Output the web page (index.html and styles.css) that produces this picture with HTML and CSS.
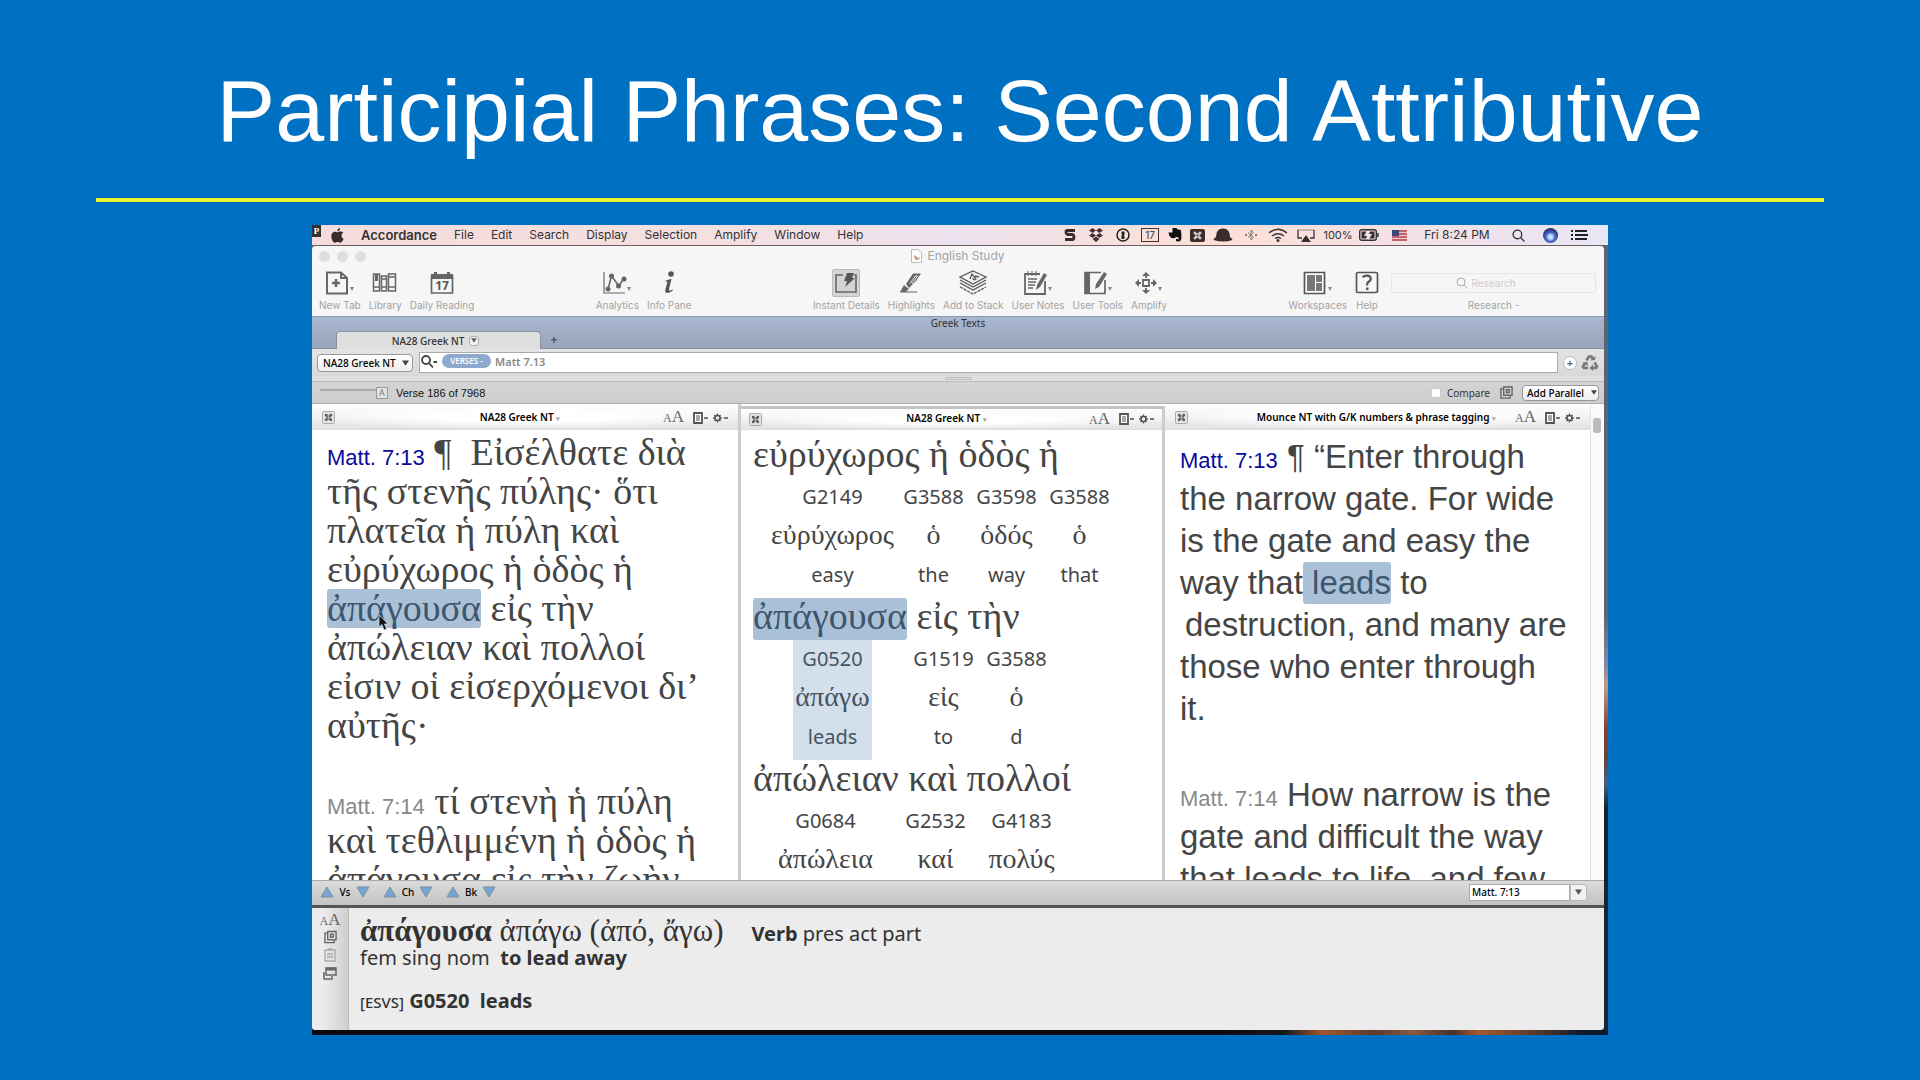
FILE: index.html
```html
<!DOCTYPE html>
<html lang="en">
<head>
<meta charset="utf-8">
<title>Participial Phrases: Second Attributive</title>
<link rel="stylesheet" href="styles.css">
</head>
<body>
<svg class="defs" aria-hidden="true">
  <symbol id="down" viewBox="0 0 8 6"><path d="M0 0h8L4 6z"/></symbol>
  <symbol id="cmd" viewBox="0 0 13 13"><rect x=".5" y=".5" width="12" height="12" rx="1" fill="#e4e4e4" stroke="#aaa"/><path d="M5 5V4.200a.8.8 0 1 0-.8.800h4.600a.8.8 0 1 0-.8-.8v4.600a.8.8 0 1 0 .8-.8H4.200a.8.8 0 1 0 .8.800z" fill="none" stroke="#555" stroke-width="1.200"/></symbol>
  <symbol id="page" viewBox="0 0 15 12"><path d="M1 1h8v10H1z" fill="#fff" stroke="#555" stroke-width="1.8"/><path d="M3 4h4M3 6h4M3 8h4" stroke="#555" stroke-width="1.200"/><path d="M11 6h4" stroke="#555" stroke-width="1.6"/></symbol>
  <symbol id="gear" viewBox="0 0 15 12"><circle cx="4.500" cy="6" r="2.500" fill="none" stroke="#555" stroke-width="1.600"/><path d="M4.500 1.500v2M4.500 8.500v2M0 6h2M7 6h2M1.500 3l1.200 1.200M7.500 3L6.300 4.200M1.500 9l1.200-1.200M7.500 9L6.300 7.800" stroke="#555" stroke-width="1.400"/><path d="M11 6h4" stroke="#555" stroke-width="1.600"/></symbol>
  <symbol id="lens" viewBox="0 0 12 12"><circle cx="5" cy="5" r="4"/><path d="M8 8l3.500 3.500"/></symbol>
  <symbol id="stackpage" viewBox="0 0 14 14"><path d="M4 1h9v9H4zM3 3H1v10h10v-2M7 8V4h3v3H7" fill="none" stroke="#666" stroke-width="1.500"/></symbol>
  <symbol id="up-tri" viewBox="0 0 14 12"><path d="M7 1l6 10H1z" fill="#78a3d3" stroke="#7a8fa8"/></symbol>
  <symbol id="down-tri" viewBox="0 0 14 12"><path d="M7 11L1 1h12z" fill="#78a3d3" stroke="#7a8fa8"/></symbol>
</svg>

<div class="slide">
  <h1 class="title">Participial Phrases: Second Attributive</h1>
  <hr class="rule">
  <main class="desktop">
    <nav class="menubar">
      <span class="badge">P</span>
      <svg class="apple" width="13" height="15" viewBox="0 0 13 15"><path d="M9 0C7.500.2 6.300 1.500 6.500 3.200 8 3.200 9.200 1.700 9 0zM6.600 4.200C5.700 4.200 5 3.700 3.900 3.700 2 3.700.3 5.300.3 8.200c0 3.200 2 6.500 3.600 6.500 1 0 1.500-.6 2.700-.6s1.600.6 2.600.6c1.500 0 2.900-2.400 3.400-3.900-2.700-1.200-2.700-4.800-.3-6C11.600 4 10.500 3.600 9.500 3.600c-1.200 0-2 .6-2.900.6z" fill="#3b2b2d"/></svg>
      <a href="#" class="app">Accordance</a><a href="#">File</a><a href="#">Edit</a><a href="#">Search</a><a href="#">Display</a><a href="#">Selection</a><a href="#">Amplify</a><a href="#">Window</a><a href="#">Help</a>
      <div class="status">
        <span class="w24"><svg width="12" height="14" viewBox="0 0 12 14"><path d="M11 2.500H3.500Q2 2.500 2 4t1.500 2.500h5Q10 7 10 9t-1.500 2.500H1" fill="none" stroke="#3b2b2d" stroke-width="3"/></svg></span>
        <span class="w28"><svg width="16" height="14" viewBox="0 0 16 14" fill="#4a3032"><path d="M4.500 0L8 2.500 4.500 5 1 2.500zM11.500 0L15 2.500 11.500 5 8 2.500zM4.500 5L8 7.500 4.500 10 1 7.500zM11.500 5L15 7.500 11.500 10 8 7.500zM8 8.500l3.500 2.500L8 14l-3.500-3z"/></svg></span>
        <span class="w26"><svg width="14" height="14" viewBox="0 0 14 14"><circle cx="7" cy="7" r="6" fill="none" stroke="#222" stroke-width="1.500"/><path d="M5.500 3.500h3V7l-.7.800.7.700v2.500h-3V7.500l.7-.7-.7-.8z" fill="#222"/></svg></span>
        <span class="w28"><span class="cal">17</span></span>
        <span class="w22"><svg width="14" height="14" viewBox="0 0 14 14" fill="#111"><path d="M4.500 0h4l.8 1.200 3.500.8q1 4 .5 9-.4 2.600-3 2.600H9q-1.500-.6-1-2.600h2v1q1-1 .5-2.500L8 9 7 10q-3 .5-4.500-.7Q.5 7 .5 4.500h4z"/></svg></span>
        <span class="w22"><svg width="15" height="13" viewBox="0 0 15 13"><rect width="15" height="13" rx="2" fill="#3b2b2d"/><path d="M6 5V4a1 1 0 1 0-1 1h5a1 1 0 1 0-1-1v5a1 1 0 1 0 1-1H5a1 1 0 1 0 1 1z" fill="none" stroke="#fff"/></svg></span>
        <span class="w30"><svg width="20" height="14" viewBox="0 0 20 14" fill="#3b2b2d"><path d="M3 9q0-8.500 7-8.500T17 9q2 1 2.500 3-9 3-19 0Q1 10 3 9z"/></svg></span>
        <span class="w26"><svg width="12" height="14" viewBox="0 0 12 14"><path d="M3 4.500l5.500 5L6 12V2l2.500 2.500-5.500 5" fill="none" stroke="#777"/><path d="M0 7h2M10 7h2" stroke="#777" stroke-width="2"/></svg></span>
        <span class="w28"><svg width="20" height="14" viewBox="0 0 20 14" fill="none" stroke="#333" stroke-width="1.400"><path d="M1 5q9-7.500 18 0M4 8q6-4.500 12 0M7 10.500q3-2 6 0"/><circle cx="10" cy="12.500" r=".8" fill="#333"/></svg></span>
        <span class="w28"><svg width="18" height="13" viewBox="0 0 18 13"><path d="M5 9H1V1M17 1v8h-4" fill="none" stroke="#333" stroke-width="1.300"/><path d="M1 1h16" stroke="#776" stroke-width=".8"/><path d="M9 6l5 7H4z" fill="#333"/></svg></span>
        <span class="w36 pct">100%</span>
        <span class="w26"><svg width="20" height="12" viewBox="0 0 20 12"><rect x=".7" y=".7" width="16.600" height="10.600" rx="2" fill="none" stroke="#333" stroke-width="1.400"/><path d="M2.500 2.500h5L5 7h3l-1 2.500H2.500zM15.500 9.500h-5L13 5h-3l1-2.500h4.500z" fill="#333"/><path d="M19 4v4" stroke="#333" stroke-width="1.500"/></svg></span>
        <span class="w34"><svg width="15" height="11" viewBox="0 0 15 11"><path d="M0 0h15v11H0z" fill="#e9c9cf"/><path d="M0 1h15M0 4h15M0 7h15M0 10h15" stroke="#b8434f" stroke-width="1.500"/><path d="M0 0h7v6H0z" fill="#3c4577"/></svg></span>
        <span class="w82 clock">Fri 8:24 PM</span>
        <span class="w40"><svg class="stroke" width="13" height="13"><use href="#lens"/></svg></span>
        <span class="w24"><span class="siri"></span></span>
        <span class="w34"><svg width="17" height="12" viewBox="0 0 17 12"><path d="M0 2h2M4 2h12M0 6h2M4 6h13M0 10h2M4 10h12" stroke="#222" stroke-width="1.800"/></svg></span>
      </div>
    </nav>

    <section class="window">
      <header class="chrome">
        <div class="titlebar">
          <div class="lights"><i></i><i></i><i></i></div>
          <div class="wtitle"><svg width="11" height="14" viewBox="0 0 11 14"><path d="M.5.500H7L10.500 4v9.500H.5z" fill="#fff" stroke="#bbb"/><path d="M3 6q0 5 3 5t2.500-3L7 9 5 7z" fill="#d09a86"/></svg>English Study</div>
        </div>
        <div class="toolbar">
          <div class="group">
            <button class="tool"><svg width="30" height="24" viewBox="0 0 30 24"><path d="M2 1.500h14L22 7v15.500H2zM16 2v5h6" fill="none" stroke="#666" stroke-width="2"/><path d="M11 8v8M7 12h8" stroke="#666" stroke-width="2.500"/><path d="M25 16h4l-2 4z" fill="#888"/></svg>New Tab</button>
            <button class="tool"><svg width="26" height="24" viewBox="0 0 26 24"><path d="M1.500 3h6v17h-6zM9.500 5h5v15h-5zM16.500 3h7v17h-7zM1.500 16h6M9.500 8h5M9.500 16h5M16.500 6h7M16.500 16h7" fill="none" stroke="#666" stroke-width="1.500"/><path d="M3 3h3v7H3z" fill="#666"/></svg>Library</button>
            <button class="tool"><svg width="24" height="24" viewBox="0 0 24 24"><path d="M1.500 5h21v17h-21z" fill="none" stroke="#666" stroke-width="1.700"/><path d="M1 3h22v5H1zM4 1h3v3H4zM17 1h3v3h-3z" fill="#666"/><text x="12" y="19" text-anchor="middle" class="day">17</text></svg>Daily Reading</button>
          </div>
          <div class="group">
            <button class="tool"><svg width="30" height="24" viewBox="0 0 30 24"><path d="M2 1v21h21" fill="none" stroke="#666" stroke-width="1.200"/><path d="M6 18L9.500 5 17 15l5-8" fill="none" stroke="#666" stroke-width="1.600"/><circle cx="6" cy="18" r="2.500" fill="#666"/><circle cx="9.500" cy="5" r="2.500" fill="#666"/><circle cx="16.500" cy="15" r="2.500" fill="#666"/><circle cx="22" cy="8" r="2.500" fill="#666"/><path d="M25 16h4l-2 4z" fill="#888"/></svg>Analytics</button>
            <button class="tool"><svg width="14" height="24" viewBox="0 0 14 24" fill="#555"><circle cx="9" cy="3" r="2.800"/><path d="M3 10q4-2 6.500-2L7 18q0 3 3.500.5v1.500Q2 25 3.500 18l2-7z"/></svg>Info Pane</button>
          </div>
          <div class="group">
            <button class="tool"><span class="pressed"><svg width="24" height="24" viewBox="0 0 24 24"><path d="M9 4H2v17h20V4h-2" fill="none" stroke="#666" stroke-width="1.600"/><path d="M13 2h7l-2 5h3L11 16l2-6H10z" fill="#555"/></svg></span>Instant Details</button>
            <button class="tool"><svg width="24" height="24" viewBox="0 0 24 24"><path d="M7 13L14 2.500h8L17 10l-7 7z" fill="#666"/><path d="M11 12.500L16.500 5h2L13 13" fill="none" stroke="#eee"/><path d="M1 21l4-7 5 4-3 2.500h11v1H1z" fill="#666"/></svg>Highlights</button>
            <button class="tool"><svg width="30" height="26" viewBox="0 0 30 26" fill="none" stroke="#555" stroke-width="1.300"><path d="M15 1l13 6-13 7L2 7zM2 10l13 7 13-7M2 13l13 7 13-7" /><path d="M2 17l13 7 13-7" stroke-dasharray="3 1"/><path d="M12 9l2-5 4 5q-3 2-3-1M17 6l4 1"/></svg>Add to Stack</button>
            <button class="tool"><svg width="30" height="24" viewBox="0 0 30 24"><path d="M17 3H2v20h20V10" fill="none" stroke="#666" stroke-width="1.800"/><path d="M5 0v5M9 0v5M13 0v5" stroke="#666"/><path d="M5 8h9M5 11h8M5 14h7M5 17h5" stroke="#666" stroke-width="1.500"/><path d="M13 19l1-5L21 2l3 2-7 12z" fill="#666"/><path d="M25 16h4l-2 4z" fill="#888"/></svg>User Notes</button>
            <button class="tool"><svg width="30" height="24" viewBox="0 0 30 24"><path d="M18 1.500H2v21h20V9" fill="none" stroke="#666" stroke-width="1.700"/><path d="M2 1h5v22H2z" fill="#666"/><path d="M12 18l1-5L21 1l3 2-8 13z" fill="#666"/><path d="M25 16h4l-2 4z" fill="#888"/></svg>User Tools</button>
            <button class="tool"><svg width="28" height="24" viewBox="0 0 28 24"><path d="M8 9h6v6H8zM11 2v5M11 17v5M1 12h5M16 12h5" fill="none" stroke="#666" stroke-width="1.800"/><path d="M7 5l4-4 4 4zM7 19l4 4 4-4zM4 8l-4 4 4 4zM18 8l4 4-4 4z" fill="#666"/><path d="M23 16h4l-2 4z" fill="#888"/></svg>Amplify</button>
          </div>
          <div class="group">
            <button class="tool"><svg width="30" height="24" viewBox="0 0 30 24"><path d="M1.500 1.500h20v21h-20z" fill="#fff" stroke="#555" stroke-width="1.700"/><path d="M4 4h8v16H4zM13 4h6v7h-6zM13 12h6v8h-6z" fill="#777"/><path d="M25 16h4l-2 4z" fill="#888"/></svg>Workspaces</button>
            <button class="tool"><svg width="24" height="24" viewBox="0 0 24 24"><rect x="1.500" y="1.500" width="21" height="20" rx="1.500" fill="none" stroke="#555" stroke-width="1.700"/><path d="M7.500 6q4-2.500 7.500-.5 2 3-1 5-2 1-2 4" fill="none" stroke="#555" stroke-width="2.200"/><path d="M11 16.500h2.500V19H11z" fill="#555"/></svg>Help</button>
            <label class="research"><span class="rbox"><svg class="pale" width="12" height="12"><use href="#lens"/></svg><input type="text" placeholder="Research" aria-label="Research"></span>Research -</label>
          </div>
        </div>
      </header>

      <div class="tabs">
        <div class="zone">Greek Texts</div>
        <button class="tab">NA28 Greek NT <span class="tabmenu"><svg width="6" height="5" fill="#666"><use href="#down"/></svg></span></button>
        <button class="plus" aria-label="New tab">+</button>
      </div>

      <div class="searchrow">
        <span class="pick big"><select aria-label="Text"><option>NA28 Greek NT</option></select><svg width="7" height="6"><use href="#down"/></svg></span>
        <div class="query"><svg width="17" height="13" viewBox="0 0 17 13"><circle cx="5" cy="5" r="4" fill="none" stroke="#444" stroke-width="1.800"/><path d="M8 8l4 4.500M12.500 7H16" stroke="#444" stroke-width="1.800"/></svg><button class="verses">VERSES -</button><input type="text" value="Matt 7.13" aria-label="Search"></div>
        <button class="add" aria-label="Add">+</button>
        <svg width="18" height="17" viewBox="0 0 18 17"><path d="M5.500 6.500L8 2.500h2.500L12 5M13.500 8.500l2.500 4-1 1.500h-4M7 14H3l-1-1.500 2-3.500" fill="none" stroke="#777" stroke-width="2.600"/><path d="M9 6.500l5-.5.500-4zM12 10.500v6.500l-3.500-3zM1.500 8.500L6.500 8l.5 4z" fill="#777"/></svg>
      </div>
      <div class="splitter"><i></i></div>
      <div class="inforow">
        <span class="track"></span><span class="knob">A</span><span class="count">Verse 186 of 7968</span>
        <label class="compare"><input type="checkbox">Compare</label>
        <svg width="13" height="13"><use href="#stackpage"/></svg>
        <span class="pick small"><select aria-label="Add parallel"><option>Add Parallel</option></select><svg width="6" height="5"><use href="#down"/></svg></span>
      </div>

      <div class="panes">
        <article class="pane">
          <header class="phead"><svg width="13" height="13"><use href="#cmd"/></svg><span class="pname">NA28 Greek NT <small>▾</small></span><span class="aa"><small>A</small>A</span><svg width="15" height="12"><use href="#page"/></svg><svg width="15" height="12"><use href="#gear"/></svg></header>
          <div class="greek" lang="grc">
            <p><a href="#" class="ref">Matt. 7:13</a> ¶ &nbsp;Εἰσέλθατε διὰ<br>τῆς στενῆς πύλης· ὅτι<br>πλατεῖα ἡ πύλη καὶ<br>εὐρύχωρος ἡ ὁδὸς ἡ<br><mark class="hit">ἀπάγουσα<svg class="pointer" width="11" height="17" viewBox="0 0 11 17"><path d="M1 1v12l3-2.500L6 16l2.500-1-2-5H10z" fill="#111" stroke="#dde6ee" stroke-width=".7"/></svg></mark> εἰς τὴν<br>ἀπώλειαν καὶ πολλοί<br>εἰσιν οἱ εἰσερχόμενοι δι’<br>αὐτῆς·</p>
            <p><a href="#" class="ref dim">Matt. 7:14</a> τί στενὴ ἡ πύλη<br>καὶ τεθλιμμένη ἡ ὁδὸς ἡ<br>ἀπάγουσα εἰς τὴν ζωὴν</p>
          </div>
        </article>

        <article class="pane focused">
          <header class="phead"><svg width="13" height="13"><use href="#cmd"/></svg><span class="pname">NA28 Greek NT <small>▾</small></span><span class="aa"><small>A</small>A</span><svg width="15" height="12"><use href="#page"/></svg><svg width="15" height="12"><use href="#gear"/></svg></header>
          <div class="inter" lang="grc">
            <p>εὐρύχωρος ἡ ὁδὸς ἡ</p>
            <div class="words one">
              <div><b>G2149</b><i>εὐρύχωρος</i><b>easy</b></div><div><b>G3588</b><i>ὁ</i><b>the</b></div><div><b>G3598</b><i>ὁδός</i><b>way</b></div><div><b>G3588</b><i>ὁ</i><b>that</b></div>
            </div>
            <p><mark class="hit">ἀπάγουσα</mark> εἰς τὴν</p>
            <div class="words two">
              <div class="soft"><b>G0520</b><i>ἀπάγω</i><b>leads</b></div><div><b>G1519</b><i>εἰς</i><b>to</b></div><div><b>G3588</b><i>ὁ</i><b>d</b></div>
            </div>
            <p>ἀπώλειαν καὶ πολλοί</p>
            <div class="words three">
              <div><b>G0684</b><i>ἀπώλεια</i></div><div><b>G2532</b><i>καί</i></div><div><b>G4183</b><i>πολύς</i></div>
            </div>
          </div>
        </article>

        <article class="pane last">
          <header class="phead"><svg width="13" height="13"><use href="#cmd"/></svg><span class="pname">Mounce NT with G/K numbers &amp; phrase tagging <small>▾</small></span><span class="aa"><small>A</small>A</span><svg width="15" height="12"><use href="#page"/></svg><svg width="15" height="12"><use href="#gear"/></svg></header>
          <div class="english">
            <p><a href="#" class="ref">Matt. 7:13</a> ¶ “Enter through<br>the narrow gate. For wide<br>is the gate and easy the<br>way that<mark class="hit">&nbsp;leads</mark> to<br><span class="lead">destruction, and many are</span><br>those who enter through<br>it.</p>
            <p><a href="#" class="ref dim">Matt. 7:14</a> How narrow is the<br>gate and difficult the way<br>that leads to life, and few</p>
          </div>
        </article>
        <div class="scroll"><i></i></div>
      </div>

      <footer class="nav">
        <button aria-label="Previous verse"><svg width="14" height="12"><use href="#up-tri"/></svg></button><span>Vs</span><button aria-label="Next verse"><svg width="14" height="12"><use href="#down-tri"/></svg></button>
        <button aria-label="Previous chapter"><svg width="14" height="12"><use href="#up-tri"/></svg></button><span>Ch</span><button aria-label="Next chapter"><svg width="14" height="12"><use href="#down-tri"/></svg></button>
        <button aria-label="Previous book"><svg width="14" height="12"><use href="#up-tri"/></svg></button><span>Bk</span><button aria-label="Next book"><svg width="14" height="12"><use href="#down-tri"/></svg></button>
        <input type="text" value="Matt. 7:13" aria-label="Go to"><button class="drop" aria-label="History"><svg width="7" height="6" fill="#555"><use href="#down"/></svg></button>
      </footer>

      <section class="details">
        <aside>
          <span class="aa"><small>A</small>A</span>
          <svg width="13" height="14"><use href="#stackpage"/></svg>
          <svg width="12" height="14" viewBox="0 0 12 14"><path d="M1 2h10v11H1zM4 1h4M3 6h6M3 9h6" fill="none" stroke="#aaa" stroke-width="1.300"/></svg>
          <svg width="14" height="14" viewBox="0 0 14 14"><path d="M3 2h10v7H3zM1 6v7h8v-3" fill="none" stroke="#666" stroke-width="1.500"/><path d="M3 3h10" stroke="#666" stroke-width="3"/></svg>
        </aside>
        <div class="parse">
          <p class="first"><span class="gk"><b>ἀπάγουσα</b> ἀπάγω (ἀπό, ἄγω)</span><span><b>Verb</b> pres act part</span></p>
          <p>fem sing nom &nbsp;<b>to lead away</b></p>
          <p class="strongs"><small>[ESVS]</small> <b>G0520 &nbsp;leads</b></p>
        </div>
      </section>
    </section>
  </main>
</div>
</body>
</html>
```
FILE: styles.css
```css
* { box-sizing: border-box; }
body { margin: 0; background: #0070c2; font-family: "Noto Sans", sans-serif; }
button, input, select { font: inherit; color: inherit; border: 0; padding: 0; margin: 0; background: none; }
a { color: inherit; text-decoration: none; }
p { margin: 0; }
svg { flex: none; display: block; }
.defs { position: absolute; width: 0; height: 0; }

.slide { display: flex; flex-direction: column; height: 100vh; min-height: 900px; padding-bottom: 45px; }
.title { margin: 0; padding-top: 61px; text-align: center; color: #fff; font: 400 88px/100px "Liberation Sans", sans-serif; }
.rule { width: 90%; height: 4px; margin: 37px auto 23px; border: 0; background: #ecfb2c; flex: none; }

.desktop { display: flex; flex-direction: column; flex: 1; min-height: 0; width: 67.5%; margin: 0 auto; color: #333;
  background: linear-gradient(90deg, #050b10 0 70%, #14191f 75%, #a5562e 78%, #5a3a30 82%, #8a5a40 85%, #4a3028 88%, #a85a30 90%, #3a2c28 96%, #0c1a30 98%) bottom / 100% 5px no-repeat,
    linear-gradient(#62626e 0 48%, #8a85a0 54%, #c09a84 57%, #8a4030 62%, #6a4038 66%, #4a607c 69%, #12222f 72%, #1a2638 100%); }

.menubar { display: flex; align-items: center; height: 21px; flex: none; gap: 17px; border-bottom: 1px solid #6d5e62; font: 12px/20px Inter, sans-serif; background: linear-gradient(90deg, #f6dcdc, #f5dfe0 30%, #ece2ee 50%, #fae0da 65%, #fde0d8 72%, #f5e0e4 82%, #e8e6f6); }
.badge { align-self: flex-start; width: 9px; height: 12px; background: #333; color: #fff; font: 700 9px/12px "Liberation Serif", serif; text-align: center; }
.apple { margin-left: -7px; }
.app { font-weight: 600; font-size: 13px; }
.status { display: flex; margin-left: auto; padding-right: 12px; }
.status > span { display: flex; align-items: center; justify-content: center; height: 20px; white-space: nowrap; }
.w22 { width: 22px; } .w24 { width: 24px; } .w26 { width: 26px; } .w28 { width: 28px; } .w30 { width: 30px; }
.w34 { width: 34px; } .w36 { width: 36px; } .w40 { width: 40px; } .w82 { width: 82px; }
.cal { width: 18px; height: 14px; border: 1px solid #4a3032; font-size: 10px; line-height: 13px; text-align: center; }
.pct { font-size: 11px; }
.clock { font-size: 12px; }
.stroke { fill: none; stroke: #333; stroke-width: 1.2; }
.siri { width: 15px; height: 15px; border-radius: 50%; background: radial-gradient(circle at 50% 60%, #bfe8f8 0 15%, #4b62c8 40%, #23204e 80%); }

.window { display: flex; flex-direction: column; flex: 1; min-height: 0; margin: 0 4px 5px 0; border-radius: 4px; overflow: hidden; background: #ddd; font-size: 10px; line-height: 14px; }
.chrome { height: 70px; flex: none; background: #f6f6f6; color: #a3a3a3; font-family: Inter, sans-serif; }
.titlebar { display: grid; grid-template-columns: 60px 1fr 60px; height: 22px; padding-bottom: 2px; align-items: center; }
.lights { display: flex; gap: 7px; padding-left: 7px; }
.lights i { width: 11px; height: 11px; border-radius: 50%; background: #dedede; }
.wtitle { display: flex; justify-content: center; align-items: center; gap: 5px; font-size: 12px; }
.toolbar { display: flex; justify-content: space-between; padding: 0 8px 0 7px; }
.group { display: flex; gap: 8px; }
.tool, .research { display: grid; grid-template-rows: 30px 14px; justify-items: center; align-items: center; white-space: nowrap; }
.day { font: 700 12px "Noto Sans", sans-serif; fill: #555; }
.pressed { display: flex; align-items: center; justify-content: center; width: 28px; height: 28px; background: #d4d4d4; border: 1px solid #bbb; border-radius: 2px; }
.research { margin-left: 4px; }
.rbox { display: flex; align-items: center; justify-content: center; gap: 4px; width: 205px; height: 20px; border: 1px solid #e7e7e7; border-radius: 2px; }
.rbox input { width: 60px; }
.rbox input::placeholder { color: #ccc; }
.pale { fill: none; stroke: #aaa; }

.tabs { display: grid; grid-template: 14px 18px / 24px 205px 26px 1fr; height: 33px; flex: none; background: linear-gradient(#a8b7d0, #98a5bd); border-top: 1px solid #8d98aa; border-bottom: 1px solid #858d9c; color: #333; }
.zone { grid-column: 1 / -1; grid-row: 1; text-align: center; line-height: 12px; }
.tab { grid-column: 2; grid-row: 2; display: flex; align-items: center; justify-content: center; gap: 5px; padding-right: 6px; background: #dfdfdf; border: 1px solid #8a93a2; border-bottom: 0; border-radius: 4px 4px 0 0; font-weight: 500; }
.tabmenu { display: flex; align-items: center; justify-content: center; width: 10px; height: 10px; border: 1px solid #aaa; border-radius: 3px; background: #f4f4f4; }
.plus { grid-column: 3; grid-row: 2; font-weight: 700; font-size: 12px; color: #555; }

.searchrow { display: flex; align-items: center; height: 27px; flex: none; padding: 0 5px; background: linear-gradient(#e4e4e4, #d9d9d9); }
.pick { display: flex; align-items: center; gap: 3px; border: 1px solid #999; border-radius: 4px; background: linear-gradient(#fff, #eee); color: #000; font-weight: 500; fill: #444; }
.pick select { appearance: none; width: 76px; }
.big { width: 96px; height: 18px; padding-left: 5px; }
.small { width: 77px; height: 16px; padding-left: 4px; margin-left: 9px; }
.small select { width: 61px; }
.query { display: flex; align-items: center; flex: 1; height: 21px; margin: 0 5px 0 6px; padding: 0 1px 3px; background: #fff; border: 1px solid #aaa; gap: 4px; }
.verses { width: 49px; height: 14px; border-radius: 7px; background: #8ea9cd; color: #fff; font-weight: 600; font-size: 8px; line-height: 14px; }
.query input { flex: 1; color: #888; font-weight: 600; font-size: 11px; height: 16px; }
.add { width: 14px; height: 14px; margin-right: 4px; border: 1px solid #bbb; border-radius: 50%; background: #fff; line-height: 12px; font-weight: 700; font-size: 11px; color: #666; }
.splitter { height: 6px; flex: none; background: #e0e0e0; border-bottom: 1px solid #bdbdbd; display: flex; justify-content: center; align-items: center; }
.splitter i { width: 27px; height: 3px; border: solid #bbb; border-width: 1px 0; }
.inforow { display: flex; align-items: center; height: 22px; flex: none; padding: 0 5px 0 8px; background: linear-gradient(#d4d4d4, #cdcdcd); border-bottom: 1px solid #b0b0b0; color: #111; }
.track { width: 56px; height: 2px; margin-bottom: 5px; background: #aaa; }
.knob { width: 12px; height: 12px; border: 1px solid #999; background: #e4e4e4; line-height: 10px; text-align: center; color: #777; font-size: 9px; }
.count { margin-left: 8px; flex: 1; font: 11px/14px "Liberation Sans", sans-serif; }
.compare { display: flex; align-items: center; gap: 6px; margin-right: 10px; color: #333; }
.compare input { appearance: none; width: 10px; height: 10px; border: 1px solid #ccc; border-radius: 2px; background: #fff; }

.panes { display: grid; grid-template: 100% / 429fr 424fr 426fr 13px; flex: 1; min-height: 0; background: #fff; }
.pane { overflow: hidden; border-right: 3px solid #ccc; color: #454545; }
.focused { border-top: 3px solid #c4c4c4; margin-top: 2px; }
.last { border-right: 1px solid #e4e4e4; }
.phead { display: flex; align-items: center; height: 26px; gap: 5px; padding: 2px 10px 0 10px; color: #000; background: radial-gradient(ellipse at center, #fff 30%, #fff0 75%), linear-gradient(#fff, #e2e2e2); border-bottom: 1px solid #ddd; }
.focused .phead { height: 21px; padding: 0 8px; }
.pname { flex: 1; text-align: center; font-weight: 600; white-space: nowrap; padding-left: 42px; }
.last .pname { text-align: right; padding: 0 14px 0 0; }
.pname small { font-size: 7px; color: #aaa; }
.aa { font: 17px/15px "Liberation Serif", serif; color: #666; margin-right: 4px; white-space: nowrap; }
.aa small { font-size: 12px; }
.scroll { background: #fafafa; padding: 14px 2px; }
.scroll i { display: block; width: 8px; height: 15px; border-radius: 3px; background: #bbb; }

.greek { padding: 3px 0 0 15px; font: 38px/39px "Liberation Serif", serif; white-space: nowrap; }
.greek p + p { margin-top: 37px; }
.ref { font: 22px/22px "Liberation Sans", sans-serif; color: #0a0a9c; }
.dim { color: #888; }
.hit { position: relative; background: #a9c0d7; color: #3d566e; border-radius: 3px; display: inline-block; }
.pointer { position: absolute; left: 51px; top: 25px; }

.inter { padding: 6px 0 0 12px; white-space: nowrap; }
.inter p { height: 42px; font: 38px/36px "Liberation Serif", serif; }
.inter .hit { padding-bottom: 6px; }
.words { display: grid; padding-left: 15px; }
.words div { display: grid; grid-auto-rows: 40px; justify-content: center; justify-items: center; justify-self: center; }
.words b { font: 20px/38px "Noto Sans", sans-serif; }
.words i { font: 28px/34px "Liberation Serif", serif; }
.words i + b { line-height: 34px; }
.one { grid-template-columns: 129px 73px 73px 73px; }
.two { grid-template-columns: 129px 93px 53px; }
.three { grid-template-columns: 115px 105px 67px; }
.words .soft { width: 79px; background: #d3dfea; color: #45545f; }

.english { padding: 6px 0 0 15px; font: 33px/42px "Liberation Sans", sans-serif; white-space: nowrap; }
.english p + p { margin-top: 44px; }
.lead { padding-left: 5px; }

.nav { display: flex; align-items: center; height: 28px; flex: none; padding: 0 17px 2px 8px; border-top: 1px solid #aaa; border-bottom: 3px solid #555; background: linear-gradient(#dcdcdc, #c2c2c2); color: #000; font-weight: 500; }
.nav span { width: 22px; text-align: center; }
.nav span + button { margin-right: 13px; }
.nav input { width: 101px; height: 17px; margin-left: auto; padding-left: 2px; background: #fff; border: 1px solid #aaa; }
.nav .drop { display: flex; align-items: center; justify-content: center; width: 17px; height: 17px; background: #f2f2f2; border: 1px solid #bbb; border-radius: 0 3px 3px 0; }

.details { display: flex; height: 122px; flex: none; background: #ececec; color: #333; }
.details aside { display: flex; flex-direction: column; align-items: center; gap: 4px; width: 37px; padding-top: 4px; border-right: 1px solid #bbb; background: linear-gradient(90deg, #ececec 30%, #cfcfcf); }
.details .aa { margin: 0; height: 14px; }
.parse { padding: 10px 0 0 11px; font-size: 20px; line-height: 26px; white-space: nowrap; }
.first { display: flex; align-items: baseline; gap: 28px; height: 27px; }
.gk { font: 31px/26px "Liberation Serif", serif; }
.strongs { margin-top: 17px; }
.strongs small { font-size: 15px; font-weight: 500; }
```
